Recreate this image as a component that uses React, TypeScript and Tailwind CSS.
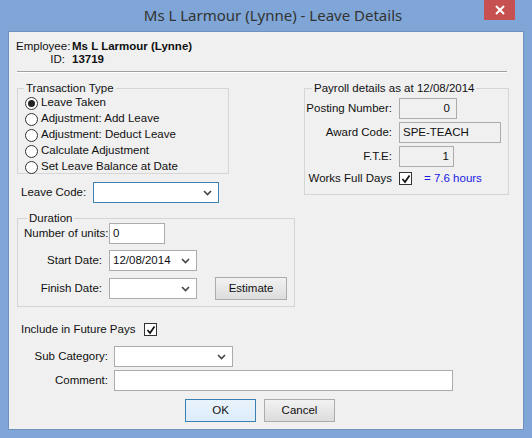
import React from "react";

const Chev = () => (
  <svg width="9" height="6" viewBox="0 0 9 6" className="shrink-0"><path d="M1 1l3.5 3.5L8 1" stroke="#444" strokeWidth="1.6" fill="none" /></svg>
);
const Check = () => (
  <div className="w-[13px] h-[13px] border border-[#333] bg-white flex items-center justify-center">
    <svg width="10" height="10" viewBox="0 0 10 10"><path d="M1.5 5l2.5 3L8.5 1.5" stroke="#111" strokeWidth="1.7" fill="none" /></svg>
  </div>
);
const Radio = ({ on, label }: { on?: boolean; label: string }) => (
  <div className="flex items-center h-[16px] gap-[3px]">
    <div className="w-[13px] h-[13px] rounded-full border border-[#333] bg-white flex items-center justify-center">
      {on && <div className="w-[7px] h-[7px] rounded-full bg-[#222]" />}
    </div>
    <span>{label}</span>
  </div>
);
const Select = ({ w, v, blue }: { w: string; v?: string; blue?: boolean }) => (
  <div className={`${w} h-[21px] bg-white border ${blue ? "border-[#3c7fb1]" : "border-[#acacac]"} flex items-center justify-between pl-[3px] pr-[6px]`}>
    <span>{v}</span>
    <Chev />
  </div>
);

export default function App() {
  return (
    <div className="w-[532px] h-[438px] bg-[#7fa6d6] flex flex-col text-[11.5px] text-[#111]" style={{ fontFamily: '"Liberation Sans", Arial, sans-serif' }}>
      <div className="h-[31px] relative flex items-center justify-center shrink-0">
        <span className="text-[15px] text-[#333] pl-[14px]" style={{ fontFamily: '"Noto Sans", sans-serif' }}>Ms L Larmour (Lynne) - Leave Details</span>
        <div className="absolute right-[17px] top-0 w-[31px] h-[20px] bg-[#c75050] flex items-center justify-center">
          <svg width="10" height="10" viewBox="0 0 10 10"><path d="M1 1l8 8M9 1l-8 8" stroke="#fff" strokeWidth="2" /></svg>
        </div>
      </div>
      <div className="mx-[8px] h-[399px] bg-[#f0f0f0] border border-[#6f91c0] px-[7px] pt-[8px]">
        <div className="grid grid-cols-[49px_auto] gap-x-[7px] leading-[13px]">
          <span className="text-right whitespace-nowrap">Employee:</span><b>Ms L Larmour (Lynne)</b>
          <span className="text-right">ID:</span><b>13719</b>
        </div>
        <div className="mt-[5px] ml-[1px] w-[490px] border-t border-b border-t-[#a0a0a0] border-b-white" />
        <div className="flex mt-[8px]">
          <div className="w-[288px]">
            <fieldset className="ml-[1px] w-[212px] h-[93px] border border-[#d5d5d5] pl-[7px] pt-0">
              <legend className="px-[2px] ml-[-1px] leading-[14px]">Transaction Type</legend>
              <Radio on label="Leave Taken" />
              <Radio label="Adjustment: Add Leave" />
              <Radio label="Adjustment: Deduct Leave" />
              <Radio label="Calculate Adjustment" />
              <Radio label="Set Leave Balance at Date" />
            </fieldset>
            <div className="flex items-center mt-[8px] ml-[5px] gap-[7px]">
              <span>Leave Code:</span>
              <Select w="w-[126px]" blue />
            </div>
            <fieldset className="mt-[8px] ml-[1px] w-[278px] h-[96px] border border-[#d5d5d5] pl-[6px] pt-0">
              <legend className="px-[2px] ml-[3px] leading-[14px]">Duration</legend>
              <div className="grid grid-cols-[78px_auto] gap-x-[7px] gap-y-[6px] items-center mt-[-2px]">
                <span className="text-right whitespace-nowrap">Number of units:</span>
                <div className="w-[56px] h-[21px] bg-white border border-[#acacac] pl-[3px] flex items-center">0</div>
                <span className="text-right">Start Date:</span>
                <Select w="w-[88px]" v="12/08/2014" />
                <span className="text-right">Finish Date:</span>
                <div className="flex items-center gap-[18px]">
                  <Select w="w-[88px]" />
                  <div className="w-[72px] h-[23px] border border-[#acacac] bg-gradient-to-b from-[#f2f2f2] to-[#dcdcdc] flex items-center justify-center">Estimate</div>
                </div>
              </div>
            </fieldset>
          </div>
          <fieldset className="w-[205px] h-[114px] border border-[#d5d5d5] pt-0 pr-[7px]">
            <legend className="px-[2px] ml-[7px] leading-[14px]">Payroll details as at 12/08/2014</legend>
            <div className="grid grid-cols-[87px_auto] gap-x-[7px] gap-y-[3px] items-center mt-[3px]">
              <span className="text-right whitespace-nowrap">Posting Number:</span>
              <div className="w-[58px] h-[21px] border border-[#acacac] text-right pr-[6px] leading-[19px]">0</div>
              <span className="text-right">Award Code:</span>
              <div className="w-[102px] h-[21px] border border-[#acacac] pl-[3px] leading-[19px]">SPE-TEACH</div>
              <span className="text-right">F.T.E:</span>
              <div className="w-[55px] h-[21px] border border-[#acacac] text-right pr-[4px] leading-[19px]">1</div>
              <span className="text-right whitespace-nowrap">Works Full Days</span>
              <div className="flex items-center gap-[12px]"><Check /><span className="text-[#1a1ae6]">= 7.6 hours</span></div>
            </div>
          </fieldset>
        </div>
        <div className="flex items-center mt-[14px] ml-[5px] gap-[9px]">
          <span>Include in Future Pays</span>
          <Check />
        </div>
        <div className="grid grid-cols-[79px_auto] gap-x-[6px] gap-y-[3px] items-center mt-[8px] ml-[13px]">
          <span className="text-right whitespace-nowrap">Sub Category:</span>
          <Select w="w-[119px]" />
          <span className="text-right">Comment:</span>
          <div className="w-[339px] h-[21px] bg-white border border-[#acacac]" />
        </div>
        <div className="flex justify-center gap-[8px] mt-[8px] pr-[12px]">
          <div className="w-[71px] h-[23px] border border-[#3c7fb1] bg-gradient-to-b from-[#eaf3fb] to-[#dcecfc] flex items-center justify-center">OK</div>
          <div className="w-[71px] h-[23px] border border-[#acacac] bg-gradient-to-b from-[#f2f2f2] to-[#dcdcdc] flex items-center justify-center">Cancel</div>
        </div>
      </div>
    </div>
  );
}
